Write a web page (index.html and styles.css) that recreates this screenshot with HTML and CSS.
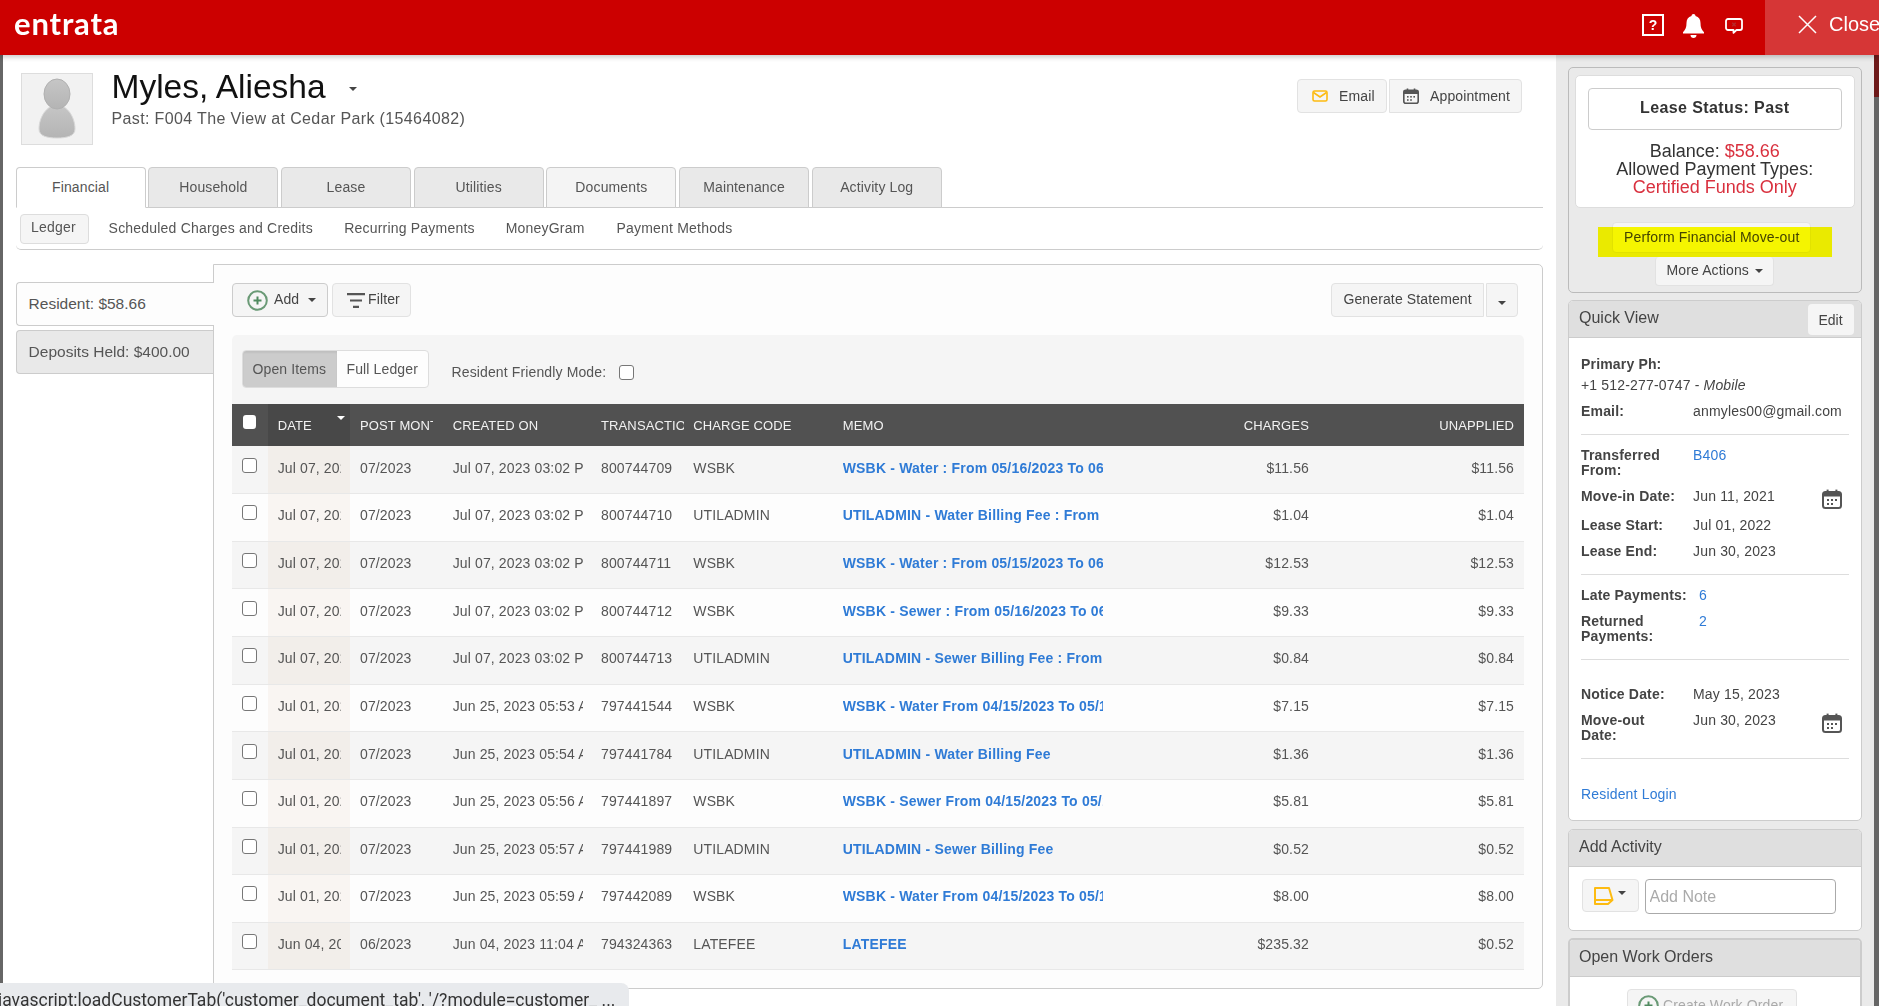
FILE: index.html
```html
<!DOCTYPE html>
<html lang="en">
<head>
<meta charset="utf-8">
<title>Myles, Aliesha</title>
<link rel="stylesheet" href="styles.css">
</head>
<body>
<svg class="defs" width="0" height="0" aria-hidden="true">
  <symbol id="cal" viewBox="0 0 20 20">
    <rect x="1" y="3" width="18" height="16" rx="2.5" fill="none" stroke="currentColor" stroke-width="2"/>
    <rect x="1" y="3" width="18" height="4.5" fill="currentColor"/>
    <rect x="4.6" y="0.6" width="2" height="4" fill="currentColor"/>
    <rect x="13.4" y="0.6" width="2" height="4" fill="currentColor"/>
    <g fill="currentColor">
      <rect x="5" y="10" width="2" height="2"/><rect x="9" y="10" width="2" height="2"/><rect x="13" y="10" width="2" height="2"/>
      <rect x="5" y="14" width="2" height="2"/><rect x="9" y="14" width="2" height="2"/>
    </g>
  </symbol>
</svg>

<div class="app">
  <header class="topbar">
    <div class="logo">entrata</div>
    <div class="top-tools">
      <span class="help">?</span>
      <svg class="bell" width="21" height="24" viewBox="0 0 21 24"><path fill="#fff" d="M10.5 0c1.2 0 2 .8 2 1.9 3.4.8 5 3.5 5 7.1 0 4.400 1 6.500 3.500 9.200v1.300H0v-1.300C2.500 15.500 3.500 13.400 3.500 9c0-3.600 1.600-6.300 5-7.100 0-1.100.8-1.900 2-1.900z"/><path fill="#fff" d="M7.500 21h6c0 1.700-1.300 3-3 3s-3-1.300-3-3z"/></svg>
      <svg class="chat" width="18" height="16" viewBox="0 0 18 16"><path fill="none" stroke="#fff" stroke-width="1.800" stroke-linejoin="round" d="M3 1h12a2 2 0 0 1 2 2v7a2 2 0 0 1-2 2h-3.500L8.500 14.800V12H3a2 2 0 0 1-2-2V3a2 2 0 0 1 2-2z"/><path stroke="#b52b2b" stroke-width="1.400" d="M7.300 4.800l3.400 3.400M10.700 4.800L7.300 8.200"/></svg>
      <div class="close-btn">
        <svg width="19" height="19" viewBox="0 0 19 19"><path stroke="#fff" stroke-width="1.500" d="M1 1l17 17M18 1L1 18"/></svg>
        <span>Close</span>
      </div>
    </div>
  </header>

  <div class="workspace">
    <div class="edge-left"></div>
    <main class="main">
      <section class="profile">
        <div class="avatar">
          <svg width="50" height="64" viewBox="0 0 50 64">
            <defs><linearGradient id="pg" x1="0" y1="0" x2="0" y2="1"><stop offset="0" stop-color="#c6c6c6"/><stop offset="1" stop-color="#b4b4b4"/></linearGradient></defs>
            <path fill="url(#pg)" stroke="#d8d8d8" d="M25 28c10 0 18 12 18 24 0 7-8 9-18 9S7 59 7 52c0-12 8-24 18-24z"/>
            <ellipse cx="25" cy="17" rx="13" ry="15" fill="url(#pg)" stroke="#b0b0b0"/>
          </svg>
        </div>
        <div class="who">
          <h1 class="name">Myles, Aliesha <i class="caret name-caret"></i></h1>
          <p class="sub">Past: F004 The View at Cedar Park (15464082)</p>
        </div>
        <div class="contact">
          <button class="btn contact-btn email-btn">
            <svg width="16" height="12" viewBox="0 0 16 12"><rect x="1" y="1" width="14" height="10" rx="1.500" fill="none" stroke="#fdbb11" stroke-width="1.600"/><path d="M1.500 2.500L8 7l6.500-4.500" fill="none" stroke="#fdbb11" stroke-width="1.600"/></svg>
            Email
          </button>
          <button class="btn contact-btn appt-btn">
            <svg class="cal-ico" width="16" height="16"><use href="#cal"/></svg>
            Appointment
          </button>
        </div>
      </section>

      <nav class="tabs">
        <a class="tab is-active">Financial</a>
        <a class="tab">Household</a>
        <a class="tab">Lease</a>
        <a class="tab">Utilities</a>
        <a class="tab tab-doc">Documents</a>
        <a class="tab">Maintenance</a>
        <a class="tab">Activity Log</a>
      </nav>

      <nav class="subnav">
        <a class="sub-ledger">Ledger</a>
        <a class="sub-sched">Scheduled Charges and Credits</a>
        <a class="sub-recur">Recurring Payments</a>
        <a class="sub-money">MoneyGram</a>
        <a class="sub-pay">Payment Methods</a>
      </nav>

      <section class="ledger">
        <aside class="ledger-tabs">
          <div class="ledger-tab is-active">Resident: $58.66</div>
          <div class="ledger-tab">Deposits Held: $400.00</div>
        </aside>
        <div class="ledger-panel">
          <div class="toolbar">
            <div class="toolbar-group">
              <button class="btn add-btn">
                <svg width="21" height="21" viewBox="0 0 21 21"><circle cx="10.500" cy="10.500" r="9.300" fill="none" stroke="#6a9a76" stroke-width="2"/><path stroke="#4f8a5f" stroke-width="2" d="M10.500 6.500v8M6.500 10.500h8"/></svg>
                <span>Add</span><i class="caret"></i>
              </button>
              <button class="btn filter-btn">
                <svg width="18" height="15" viewBox="0 0 18 15"><path stroke="#555" stroke-width="2.200" d="M0 1.100h18M3 7.500h12M6 13.900h6"/></svg>
                <span>Filter</span>
              </button>
            </div>
            <div class="toolbar-group">
              <button class="btn gen-btn">Generate Statement</button>
              <button class="btn gen-caret"><i class="caret"></i></button>
            </div>
          </div>

          <div class="filters">
            <div class="segment">
              <span class="seg is-on">Open Items</span>
              <span class="seg">Full Ledger</span>
            </div>
            <label class="friendly">Resident Friendly Mode: <input class="check" type="checkbox"></label>
          </div>

          <table class="grid">
            <colgroup>
              <col class="c-check"><col class="c-date"><col class="c-post"><col class="c-created"><col class="c-trans"><col class="c-code"><col class="c-memo"><col class="c-charges"><col class="c-unapplied">
            </colgroup>
            <thead>
              <tr>
                <th class="t-check"><input class="check check-head" type="checkbox"></th>
                <th class="t-date"><span>DATE</span><i class="sort"></i></th>
                <th class="t-post"><span>POST MONTH</span></th>
                <th class="t-created"><span>CREATED ON</span></th>
                <th class="t-trans"><span>TRANSACTION</span></th>
                <th class="t-code"><span>CHARGE CODE</span></th>
                <th class="t-memo"><span>MEMO</span></th>
                <th class="t-money">CHARGES</th>
                <th class="t-money">UNAPPLIED</th>
              </tr>
            </thead>
            <tbody>
              <tr><td class="t-check"><input class="check" type="checkbox"></td><td class="t-date"><span>Jul 07, 2023</span></td><td class="t-post"><span>07/2023</span></td><td class="t-created"><span>Jul 07, 2023 03:02 PM</span></td><td class="t-trans"><span>800744709</span></td><td class="t-code"><span>WSBK</span></td><td class="t-memo"><span><a>WSBK - Water : From 05/16/2023 To 06/15/2023</a></span></td><td class="t-money">$11.56</td><td class="t-money">$11.56</td></tr>
              <tr><td class="t-check"><input class="check" type="checkbox"></td><td class="t-date"><span>Jul 07, 2023</span></td><td class="t-post"><span>07/2023</span></td><td class="t-created"><span>Jul 07, 2023 03:02 PM</span></td><td class="t-trans"><span>800744710</span></td><td class="t-code"><span>UTILADMIN</span></td><td class="t-memo"><span><a>UTILADMIN - Water Billing Fee : From</a></span></td><td class="t-money">$1.04</td><td class="t-money">$1.04</td></tr>
              <tr><td class="t-check"><input class="check" type="checkbox"></td><td class="t-date"><span>Jul 07, 2023</span></td><td class="t-post"><span>07/2023</span></td><td class="t-created"><span>Jul 07, 2023 03:02 PM</span></td><td class="t-trans"><span>800744711</span></td><td class="t-code"><span>WSBK</span></td><td class="t-memo"><span><a>WSBK - Water : From 05/15/2023 To 06/15/2023</a></span></td><td class="t-money">$12.53</td><td class="t-money">$12.53</td></tr>
              <tr><td class="t-check"><input class="check" type="checkbox"></td><td class="t-date"><span>Jul 07, 2023</span></td><td class="t-post"><span>07/2023</span></td><td class="t-created"><span>Jul 07, 2023 03:02 PM</span></td><td class="t-trans"><span>800744712</span></td><td class="t-code"><span>WSBK</span></td><td class="t-memo"><span><a>WSBK - Sewer : From 05/16/2023 To 06/15/2023</a></span></td><td class="t-money">$9.33</td><td class="t-money">$9.33</td></tr>
              <tr><td class="t-check"><input class="check" type="checkbox"></td><td class="t-date"><span>Jul 07, 2023</span></td><td class="t-post"><span>07/2023</span></td><td class="t-created"><span>Jul 07, 2023 03:02 PM</span></td><td class="t-trans"><span>800744713</span></td><td class="t-code"><span>UTILADMIN</span></td><td class="t-memo"><span><a>UTILADMIN - Sewer Billing Fee : From</a></span></td><td class="t-money">$0.84</td><td class="t-money">$0.84</td></tr>
              <tr><td class="t-check"><input class="check" type="checkbox"></td><td class="t-date"><span>Jul 01, 2023</span></td><td class="t-post"><span>07/2023</span></td><td class="t-created"><span>Jun 25, 2023 05:53 AM</span></td><td class="t-trans"><span>797441544</span></td><td class="t-code"><span>WSBK</span></td><td class="t-memo"><span><a>WSBK - Water From 04/15/2023 To 05/15/2023</a></span></td><td class="t-money">$7.15</td><td class="t-money">$7.15</td></tr>
              <tr><td class="t-check"><input class="check" type="checkbox"></td><td class="t-date"><span>Jul 01, 2023</span></td><td class="t-post"><span>07/2023</span></td><td class="t-created"><span>Jun 25, 2023 05:54 AM</span></td><td class="t-trans"><span>797441784</span></td><td class="t-code"><span>UTILADMIN</span></td><td class="t-memo"><span><a>UTILADMIN - Water Billing Fee</a></span></td><td class="t-money">$1.36</td><td class="t-money">$1.36</td></tr>
              <tr><td class="t-check"><input class="check" type="checkbox"></td><td class="t-date"><span>Jul 01, 2023</span></td><td class="t-post"><span>07/2023</span></td><td class="t-created"><span>Jun 25, 2023 05:56 AM</span></td><td class="t-trans"><span>797441897</span></td><td class="t-code"><span>WSBK</span></td><td class="t-memo"><span><a>WSBK - Sewer From 04/15/2023 To 05/15/2023</a></span></td><td class="t-money">$5.81</td><td class="t-money">$5.81</td></tr>
              <tr><td class="t-check"><input class="check" type="checkbox"></td><td class="t-date"><span>Jul 01, 2023</span></td><td class="t-post"><span>07/2023</span></td><td class="t-created"><span>Jun 25, 2023 05:57 AM</span></td><td class="t-trans"><span>797441989</span></td><td class="t-code"><span>UTILADMIN</span></td><td class="t-memo"><span><a>UTILADMIN - Sewer Billing Fee</a></span></td><td class="t-money">$0.52</td><td class="t-money">$0.52</td></tr>
              <tr><td class="t-check"><input class="check" type="checkbox"></td><td class="t-date"><span>Jul 01, 2023</span></td><td class="t-post"><span>07/2023</span></td><td class="t-created"><span>Jun 25, 2023 05:59 AM</span></td><td class="t-trans"><span>797442089</span></td><td class="t-code"><span>WSBK</span></td><td class="t-memo"><span><a>WSBK - Water From 04/15/2023 To 05/15/2023</a></span></td><td class="t-money">$8.00</td><td class="t-money">$8.00</td></tr>
              <tr><td class="t-check"><input class="check" type="checkbox"></td><td class="t-date"><span>Jun 04, 2023</span></td><td class="t-post"><span>06/2023</span></td><td class="t-created"><span>Jun 04, 2023 11:04 AM</span></td><td class="t-trans"><span>794324363</span></td><td class="t-code"><span>LATEFEE</span></td><td class="t-memo"><span><a>LATEFEE</a></span></td><td class="t-money">$235.32</td><td class="t-money">$0.52</td></tr>
            </tbody>
          </table>
        </div>
      </section>
    </main>

    <aside class="side">
      <section class="status-panel">
        <div class="status-card">
          <div class="status-title">Lease Status: Past</div>
          <p class="status-text">Balance: <b>$58.66</b><br>Allowed Payment Types:<br><b>Certified Funds Only</b></p>
        </div>
        <button class="btn perform-btn">Perform Financial Move-out</button>
        <button class="btn more-btn">More Actions <i class="caret"></i></button>
        <div class="marker"></div>
      </section>

      <section class="panel qv">
        <header class="panel-head">
          <span>Quick View</span>
          <button class="btn edit-btn">Edit</button>
        </header>
        <div class="qv-body">
          <div class="qv-line"><b>Primary Ph:</b></div>
          <div class="qv-line qv-phone">+1 512-277-0747 - <em>Mobile</em></div>
          <div class="qv-row"><b>Email:</b><span>anmyles00@gmail.com</span></div>
          <hr class="qv-rule">
          <div class="qv-row"><b>Transferred<br>From:</b><a>B406</a></div>
          <div class="qv-row qv-cal"><b>Move-in Date:</b><span>Jun 11, 2021</span><svg class="cal-ico" width="20" height="20"><use href="#cal"/></svg></div>
          <div class="qv-row"><b>Lease Start:</b><span>Jul 01, 2022</span></div>
          <div class="qv-row"><b>Lease End:</b><span>Jun 30, 2023</span></div>
          <hr class="qv-rule">
          <div class="qv-row qv-pay"><b>Late Payments:</b><a>6</a></div>
          <div class="qv-row qv-pay"><b>Returned<br>Payments:</b><a>2</a></div>
          <hr class="qv-rule qv-rule-wide">
          <div class="qv-row"><b>Notice Date:</b><span>May 15, 2023</span></div>
          <div class="qv-row qv-cal"><b>Move-out<br>Date:</b><span>Jun 30, 2023</span><svg class="cal-ico" width="20" height="20"><use href="#cal"/></svg></div>
          <hr class="qv-rule qv-rule-wide">
          <a class="qv-login">Resident Login</a>
        </div>
      </section>

      <section class="panel activity">
        <header class="panel-head"><span>Add Activity</span></header>
        <div class="activity-body">
          <button class="btn note-btn">
            <svg width="20" height="18" viewBox="0 0 20 18"><path fill="none" stroke="#fdbb11" stroke-width="2" stroke-linejoin="round" d="M1 1h14l3.500 12-4.500 4H1zM1 13h17.500"/></svg>
            <i class="caret"></i>
          </button>
          <input class="note-input" type="text" placeholder="Add Note">
        </div>
      </section>

      <section class="panel orders">
        <header class="panel-head"><span>Open Work Orders</span></header>
        <div class="orders-body">
          <button class="btn create-btn">
            <svg width="21" height="21" viewBox="0 0 21 21"><circle cx="10.500" cy="10.500" r="9.300" fill="none" stroke="#6a9a76" stroke-width="2"/><path stroke="#4f8a5f" stroke-width="2" d="M10.500 6.500v8M6.500 10.500h8"/></svg>
            <span>Create Work Order</span>
          </button>
        </div>
      </section>
    </aside>
    <div class="edge-right"></div>
  </div>

  <div class="status-bubble">javascript:loadCustomerTab('customer_document_tab', '/?module=customer_ ...</div>
</div>
</body>
</html>
```
FILE: styles.css
```css
* { box-sizing: border-box; }
html, body { margin: 0; padding: 0; height: 100%; }
body {
  font-family: "Liberation Sans", Arial, sans-serif;
  font-size: 14px;
  letter-spacing: .13px;
  color: #444;
  background: #fff;
  overflow: hidden;
}
.defs { position: absolute; }
a { color: #2f7bd6; text-decoration: none; }
button { font: inherit; letter-spacing: inherit; color: inherit; }

.app { position: relative; display: flex; flex-direction: column; width: 100%; height: 100vh; overflow: hidden; }

/* Top bar */
.topbar {
  position: relative;
  z-index: 3;
  flex: 0 0 55px;
  display: flex;
  justify-content: space-between;
  background: #cc0000;
  box-shadow: 0 2px 5px rgba(0,0,0,.22);
  color: #fff;
}
.logo {
  padding: 5px 0 0 14px;
  font-family: "Lato", sans-serif;
  font-size: 31px;
  line-height: 36px;
  font-weight: 700;
  letter-spacing: .85px;
}
.top-tools { display: flex; align-items: flex-start; }
.help {
  width: 22px; height: 22px;
  margin-top: 14px;
  border: 2px solid #fff;
  font-weight: 700;
  font-size: 14px;
  line-height: 18px;
  text-align: center;
}
.bell { margin: 14px 0 0 19px; }
.chat { margin: 18px 22px 0 21px; }
.close-btn {
  width: 114px; height: 55px;
  display: flex;
  align-items: center;
  gap: 12px;
  padding: 0 0 7px 33px;
  background: #d63636;
  font-size: 20px;
  letter-spacing: 0;
  white-space: nowrap;
  overflow: hidden;
}
.close-btn svg { flex: none; }

/* Frame */
.workspace { flex: 1; display: flex; min-height: 0; }
.edge-left { flex: 0 0 3px; background: #666; }
.edge-right { flex: 0 0 5px; background: linear-gradient(#6e1a1a 42px, #666 42px); }
.main { flex: 0 0 1553px; padding: 0 13px 0 12.6px; background: #fff; }

/* Buttons */
.btn {
  border: 1px solid #e2e2e2;
  border-radius: 4px;
  background: #f5f5f5;
  color: #444;
  padding: 0;
}
.caret {
  display: inline-block;
  width: 0; height: 0;
  border: 4px solid transparent;
  border-top-color: #444;
  border-bottom: 0;
}

/* Profile */
.profile { display: flex; align-items: flex-start; height: 112px; padding-top: 18px; }
.avatar {
  flex: none;
  display: flex; align-items: center; justify-content: center;
  width: 72px; height: 72px;
  margin-left: 5.400px;
  background: #f2f2f2;
  border: 1px solid #ddd;
}
.who { flex: 1; margin-left: 18.500px; }
.name {
  margin: -5px 0 0;
  font-size: 33.500px;
  line-height: 38px;
  font-weight: 400;
  letter-spacing: 0;
  color: #111;
}
.name-caret { margin-left: 14px; vertical-align: 7px; }
.sub { margin: 3px 0 0; font-size: 16px; line-height: 20px; letter-spacing: .37px; color: #555; }
.contact { display: flex; gap: 2px; margin: 6px 21px 0 0; }
.contact-btn { display: flex; align-items: center; height: 34px; padding-bottom: 1px; }
.email-btn { width: 90px; gap: 11px; padding-left: 14px; }
.appt-btn { width: 133px; gap: 11px; padding-left: 13px; border-radius: 0 4px 4px 0; }
.cal-ico { color: #555; flex: none; }

/* Tabs */
.tabs { display: flex; gap: 2.700px; height: 40px; }
.tab {
  width: 130px; height: 41px;
  padding-top: 11px;
  text-align: center;
  color: #555;
  line-height: 16px;
  background: #e9e9e9;
  border: 1px solid #ccc;
  border-radius: 4px 4px 0 0;
}
.tab.is-active { position: relative; z-index: 1; background: #fff; border-bottom-color: #fff; }
.tab.tab-doc { background: #f4f4f4; }

.subnav {
  display: flex;
  align-items: flex-start;
  height: 43px;
  padding: 6px 0 0 4px;
  border: 1px solid #ccc;
  border-width: 1px 0 1px 0;
  border-radius: 0 0 5px 5px;
  letter-spacing: .2px;
  color: #555;
}
.subnav a { color: #555; line-height: 26px; }
.subnav a:not(.sub-ledger) { padding-top: 1px; }
.sub-ledger {
  width: 69px; height: 30px;
  margin-right: 20px;
  padding-left: 10.500px;
  line-height: 24px !important;
  background: #f5f5f5;
  border: 1px solid #ddd;
  border-radius: 4px;
}
.sub-sched { margin-right: 31.400px; }
.sub-recur { margin-right: 31px; }
.sub-money { margin-right: 32px; }

/* Ledger */
.ledger { display: flex; padding-top: 14px; align-items: flex-start; }
.ledger-tabs { flex: 0 0 197.400px; padding: 18px 0 0; display: flex; flex-direction: column; gap: 4px; }
.ledger-tab {
  position: relative;
  height: 44px;
  padding-left: 12px;
  font-size: 15.500px;
  line-height: 41px;
  letter-spacing: 0;
  color: #555;
  background: #e9e9e9;
  border: 1px solid #ccc;
  border-right: 0;
  border-radius: 4px 0 0 4px;
}
.ledger-tab.is-active { z-index: 1; margin-right: -1px; background: #fdfdfd; }
.ledger-panel {
  flex: 1;
  height: 725px;
  padding: 18px 18px 0 18px;
  background: #fdfdfd;
  border: 1px solid #ccc;
  border-radius: 0 5px 5px 0;
}
.toolbar { display: flex; justify-content: space-between; height: 34px; padding-right: 6.500px; }
.toolbar-group { display: flex; gap: 4px; }
.add-btn {
  display: flex; align-items: center;
  width: 96px; height: 34px;
  padding: 0 0 0 14px;
  border-color: #ccc;
}
.add-btn span { margin: -3px 9px 0 6px; }
.filter-btn {
  display: flex; align-items: center;
  width: 79px; height: 34px;
  padding: 0 0 0 14px;
  gap: 3px;
}
.filter-btn span { margin-top: -3px; }
.toolbar-group:last-child { gap: 2px; }
.gen-btn { width: 153px; height: 34px; padding-bottom: 3px; border-radius: 4px 0 0 4px; }
.gen-caret { width: 31.400px; height: 34px; border-radius: 0 4px 4px 0; }

.filters {
  display: flex;
  align-items: flex-start;
  height: 69px;
  margin-top: 18px;
  padding: 15px 0 0 10px;
  background: #f5f5f5;
  border-radius: 5px 5px 0 0;
}
.segment { display: flex; height: 38px; border: 1px solid #ddd; border-radius: 4px; overflow: hidden; background: #fdfdfd; }
.seg { padding: 0 10px 0 9.500px; line-height: 36px; color: #555; }
.seg.is-on { width: 94px; background: #ccc; box-shadow: inset 0 2px 2px rgba(0,0,0,.06); }
.friendly { display: flex; align-items: center; gap: 12.500px; height: 22px; margin: 11px 0 0 22.500px; color: #555; }
.check {
  appearance: none;
  display: block;
  flex: none;
  width: 15px; height: 15px;
  margin: 0;
  background: #fff;
  border: 1.500px solid #777;
  border-radius: 3px;
}

/* Table */
.grid { width: 100%; table-layout: fixed; border-collapse: collapse; }
.c-check { width: 36px; }
.c-date { width: 82px; }
.c-post { width: 92.500px; }
.c-created { width: 148.500px; }
.c-trans { width: 93px; }
.c-code { width: 148.700px; }
.c-memo { width: 280.300px; }
.c-charges { width: 206px; }
.grid th {
  height: 42px;
  padding: 0;
  font-size: 13px;
  font-weight: 400;
  color: #f2f2f2;
  text-align: left;
  background: #515151;
}
.grid td {
  height: 47.640px;
  padding: 0 0 4px;
  color: #555;
  background: #fdfdfd;
  border-bottom: 1px solid #e8e8e8;
}
.grid tbody tr:nth-child(odd) td { background: #f5f5f5; }
.grid th > span, .grid td > span { display: block; overflow: hidden; white-space: nowrap; }
.grid th.t-check, .grid td.t-check { padding-left: 10.400px; }
.grid td.t-check { padding-bottom: 9px; }
.grid th.t-check { padding-bottom: 6px; }
.check-head { border: 0; width: 13px; height: 14px; margin-left: 1px; }
.grid th.t-date { position: relative; background: #484848; padding-left: 9.700px; padding-right: 8.500px; }
.grid td.t-date { padding-left: 9.700px; padding-right: 8.500px; }
.grid tbody tr:nth-child(odd) td.t-date { background: #f2eeea; }
.grid tbody tr:nth-child(even) td.t-date { background: #f9f5f2; }
.t-post { padding-left: 10px !important; padding-right: 9.500px !important; }
.t-created { padding-left: 10.200px !important; padding-right: 8.400px !important; }
.t-trans { padding-left: 10px !important; }
.t-code { padding-left: 9.300px !important; }
.t-memo { padding-left: 10px !important; padding-right: 10px !important; }
.t-memo a { font-weight: 700; letter-spacing: .19px; }
.grid .t-money { padding-right: 10px; text-align: right; }
.sort {
  position: absolute;
  right: 5px; top: 12px;
  border: 4px solid transparent;
  border-top-color: #fff;
  border-bottom: 0;
}

/* Sidebar */
.side { flex: 0 0 318px; padding: 12px 12.500px 0 12px; background: #eaeaea; overflow: hidden; }
.status-panel {
  position: relative;
  display: flex; flex-direction: column; align-items: center;
  height: 226px;
  padding: 7px 6px 0;
  border: 1px solid #bbb;
  border-radius: 5px;
}
.status-card {
  width: 100%; height: 133px;
  padding: 12px 12px 0;
  background: #fff;
  border: 1px solid #ddd;
  border-radius: 5px;
  text-align: center;
}
.status-title {
  height: 42px;
  font-size: 16px;
  line-height: 37px;
  font-weight: 700;
  letter-spacing: .4px;
  color: #333;
  border: 1px solid #ccc;
  border-radius: 4px;
}
.status-text { margin: 12px 0 0; font-size: 18px; line-height: 18px; letter-spacing: 0; color: #333; }
.status-text b { font-weight: 400; color: #d9303e; }
.perform-btn { width: 199px; height: 31px; margin: 14px 6px 0 0; padding-bottom: 2px; }
.more-btn { width: 119px; height: 29px; margin-top: 4px; border-top: 0; padding-bottom: 2px; }
.more-btn .caret { margin-left: 2px; vertical-align: 2px; }
.marker {
  position: absolute;
  left: 29px; top: 159px;
  width: 234px; height: 30px;
  background: #ffff00;
  mix-blend-mode: multiply;
}

.panel {
  margin-top: 7px;
  background: #fff;
  border: 1px solid #ccc;
  border-radius: 5px;
  overflow: hidden;
}
.panel-head {
  display: flex; align-items: center; justify-content: space-between;
  height: 37px;
  padding: 0 7px 0 10px;
  background: #dfdfdf;
  border-bottom: 1px solid #ccc;
  font-size: 16px;
  letter-spacing: 0;
  color: #444;
}
.panel-head > span { margin-top: -3px; }
.edit-btn { width: 46px; height: 31px; font-size: 14px; border: 0; margin-top: 1px; }

.qv-body { height: 482px; padding: 18.500px 12px 0 12px; line-height: 15px; letter-spacing: .17px; color: #444; }
.qv-line { margin-bottom: 6.500px; }
.qv-phone { margin-bottom: 11px; }
.qv-line em { font-style: italic; }
.qv-row { display: grid; grid-template-columns: 112px 1fr 27px; margin-bottom: 11px; }
.qv-pay { grid-template-columns: 118px 1fr; }
.qv-cal { margin-bottom: 8.500px; }
.qv-cal .cal-ico { margin-top: 0; }
.qv-rule { margin: 15px 0 13px; border: 0; border-top: 1px solid #ddd; }
.qv-rule-wide { margin-bottom: 27.500px; }
.qv-login { display: block; }

.activity { margin-top: 8px; }
.activity-body { display: flex; gap: 6px; height: 63px; padding: 12px 0 0 12.500px; }
.note-btn { display: flex; align-items: center; gap: 4px; width: 57px; height: 33px; padding-left: 11px; }
.note-btn .caret { margin-bottom: 6px; }
.note-input {
  width: 191px; height: 35px;
  padding: 0 4px;
  font: 16px "Liberation Sans", Arial, sans-serif;
  border: 1px solid #aaa;
  border-radius: 4px;
  background: #fff;
}
.note-input::placeholder { color: #aaa; opacity: 1; }

.orders { margin-top: 7px; border-width: 2px; }
.orders .panel-head { height: 37px; padding-left: 9px; }
.orders-body { height: 60px; padding: 12px 0 0 57px; }
.create-btn {
  display: flex; align-items: flex-start; gap: 4px;
  width: 170px; height: 36px;
  padding: 5px 0 0 10px;
  color: #aaa;
}
.create-btn span { margin-top: 2px; }

/* Status bubble */
.status-bubble {
  position: absolute;
  left: 0; bottom: 0;
  z-index: 4;
  width: 628.500px; height: 23px;
  padding: 8px 0 0;
  overflow: hidden;
  white-space: nowrap;
  text-indent: -2px;
  font-family: "Roboto", sans-serif;
  font-size: 17.500px;
  line-height: 19px;
  letter-spacing: 0;
  color: #333;
  background: #e8eaed;
  border-radius: 0 8px 0 0;
}
```
